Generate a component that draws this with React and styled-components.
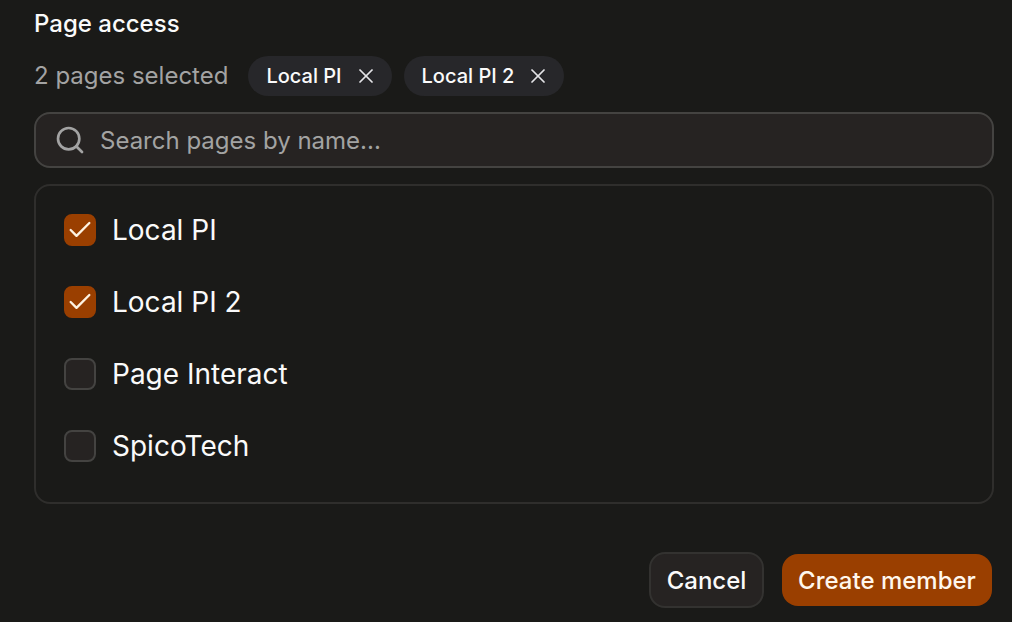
import React from "react";
import styled, { createGlobalStyle } from "styled-components";
import { Search, X, Check } from "lucide-react";

const Global = createGlobalStyle`
  html, body { margin: 0; padding: 0; background: #1a1a18; }
  body { font-family: Inter, "Liberation Sans", sans-serif; width: 1012px; height: 622px; overflow: hidden; }
`;
const Page = styled.div`
  box-sizing: border-box; width: 1012px; height: 622px; padding: 8px 18px 0 34px;
  display: flex; flex-direction: column; background: #1a1a18;
`;
const Title = styled.div`
  font-size: 24px; line-height: 32px; font-weight: 500; color: #fafafa;
`;
const SelectedRow = styled.div`
  display: flex; align-items: center; height: 40px; margin-top: 16px;
`;
const Count = styled.span`
  font-size: 24px; line-height: 32px; color: #a3a3a3; margin-right: 20px;
`;
const Chip = styled.span`
  display: inline-flex; align-items: center; box-sizing: border-box; height: 40px;
  padding: 0 14px 0 18px; margin-right: 12px; border-radius: 20px; background: #27272a;
  color: #fafafa; font-size: 20px; font-weight: 500; gap: 12px;
`;
const SearchBox = styled.div`
  box-sizing: border-box; height: 56px; margin-top: 16px; display: flex; align-items: center;
  gap: 14px; padding: 0 18px; border: 2px solid #444341; border-radius: 16px; background: #262322;
`;
const Placeholder = styled.span`
  font-size: 24px; color: #a3a3a3;
`;
const List = styled.div`
  box-sizing: border-box; height: 320px; margin-top: 16px; padding: 8px 28px;
  border: 2px solid #2f2e2c; border-radius: 16px;
`;
const Row = styled.div`
  display: flex; align-items: center; height: 72px; gap: 16px;
  font-size: 28px; color: #fafafa;
`;
const Box = styled.span`
  box-sizing: border-box; width: 32px; height: 32px; border-radius: 8px; display: flex;
  align-items: center; justify-content: center; color: #fef3e2;
  background: ${p => (p.$on ? "#9a3f00" : "#262322")};
  border: 2px solid ${p => (p.$on ? "#9a3f00" : "#444341")};
`;
const Actions = styled.div`
  display: flex; justify-content: flex-end; align-items: center; gap: 18px; margin-top: 48px; padding-right: 2px;
`;
const Cancel = styled.button`
  box-sizing: border-box; height: 56px; width: 115px; border-radius: 16px; border: 2px solid #333230;
  background: #262322; color: #fafafa; font: 500 24px Inter, sans-serif; padding: 0;
`;
const Create = styled.button`
  box-sizing: border-box; height: 52px; width: 210px; border-radius: 16px; border: 0;
  background: #9a3f00; color: #fff7ed; font: 500 24px Inter, sans-serif; padding: 0;
`;

const pages = [["Local PI", true], ["Local PI 2", true], ["Page Interact", false], ["SpicoTech", false]];

export default function App() {
  return (
    <Page>
      <Global />
      <Title>Page access</Title>
      <SelectedRow>
        <Count>2 pages selected</Count>
        <Chip>Local PI<X size={24} strokeWidth={1.75} color="#e4e4e7" /></Chip>
        <Chip>Local PI 2<X size={24} strokeWidth={1.75} color="#e4e4e7" /></Chip>
      </SelectedRow>
      <SearchBox>
        <Search size={32} strokeWidth={2} color="#a3a3a3" />
        <Placeholder>Search pages by name...</Placeholder>
      </SearchBox>
      <List>
        {pages.map(([name, on]) => (
          <Row key={name}>
            <Box $on={on}>{on && <Check size={28} strokeWidth={2} />}</Box>
            {name}
          </Row>
        ))}
      </List>
      <Actions>
        <Cancel>Cancel</Cancel>
        <Create>Create member</Create>
      </Actions>
    </Page>
  );
}
